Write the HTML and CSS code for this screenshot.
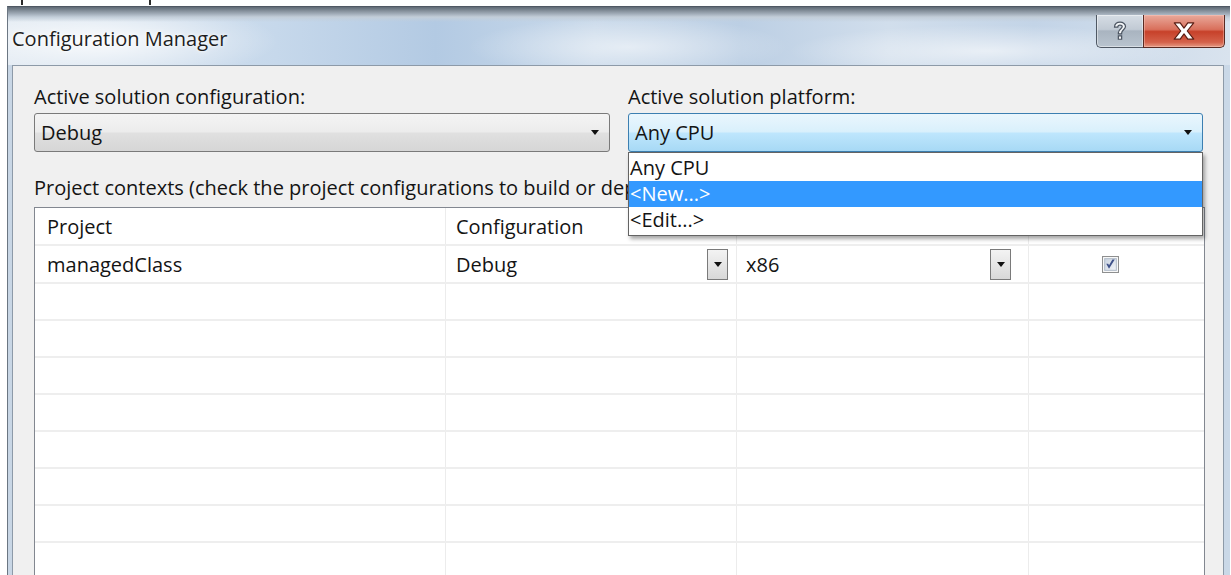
FILE: index.html
```html
<!DOCTYPE html>
<html lang="en">
<head>
<meta charset="utf-8">
<title>Configuration Manager</title>
<link rel="stylesheet" href="styles.css">
</head>
<body>
<div class="screen">
  <div class="strip"><span class="tick"></span><span class="tick tick-2"></span></div>
  <div class="window">
    <div class="titlebar">
      <div class="title">Configuration Manager</div>
      <div class="caption-buttons">
        <div class="cbtn help">
          <svg width="20" height="22" viewBox="0 0 18 20"><path d="M4 6.5 C4 3 6.5 2 9 2 C12 2 14 3.6 14 6 C14 8.6 10.5 9.2 10.5 11.8 L10.5 12.6 L7.5 12.6 L7.5 11.5 C7.5 8.3 11 7.8 11 6.2 C11 5.2 10.2 4.7 9 4.7 C7.8 4.7 7 5.4 7 6.5 Z M7.5 14.5 H10.5 V17.5 H7.5 Z" fill="#f4f6f8" stroke="#4a5360" stroke-width="1.1"/></svg>
        </div>
        <div class="cbtn close">
          <svg width="26" height="20" viewBox="0 0 24 18"><path d="M3 1.5 H8.5 L12 6.3 L15.5 1.5 H21 L15 9 L21 16.5 H15.5 L12 11.7 L8.5 16.5 H3 L9 9 Z" fill="#fff" stroke="#5a1e14" stroke-width="1.1" stroke-linejoin="round"/></svg>
        </div>
      </div>
    </div>
    <div class="client">
      <div class="selectors">
        <div class="field">
          <div class="label">Active solution configuration:</div>
          <div class="combo">
            <span class="combo-text">Debug</span>
            <span class="arrow"></span>
          </div>
        </div>
        <div class="field">
          <div class="label">Active solution platform:</div>
          <div class="combo combo-hot">
            <span class="combo-text">Any CPU</span>
            <span class="arrow"></span>
          </div>
          <ul class="droplist">
            <li>Any CPU</li>
            <li class="selected">&lt;New...&gt;</li>
            <li>&lt;Edit...&gt;</li>
          </ul>
        </div>
      </div>
      <div class="label contexts">Project contexts (check the project configurations to build or deploy):</div>
      <div class="grid">
        <div class="row head">
          <div class="cell c-project">Project</div>
          <div class="cell c-config">Configuration</div>
          <div class="cell c-platform">Platform</div>
          <div class="cell c-build">Build</div>
        </div>
        <div class="row first">
          <div class="cell c-project">managedClass</div>
          <div class="cell c-config">
            <span class="cell-text">Debug</span>
            <span class="mini-btn"><span class="arrow"></span></span>
          </div>
          <div class="cell c-platform">
            <span class="cell-text">x86</span>
            <span class="mini-btn"><span class="arrow"></span></span>
          </div>
          <div class="cell c-build">
            <svg class="check" width="17" height="17" viewBox="0 0 16 16">
              <defs>
                <linearGradient id="box" x1="0" y1="0" x2="1" y2="1">
                  <stop offset="0" stop-color="#c9d3e0"/>
                  <stop offset="1" stop-color="#f2f4f8"/>
                </linearGradient>
              </defs>
              <rect x="0.5" y="0.5" width="15" height="15" fill="#fff" stroke="#8e8f8f"/>
              <rect x="2.5" y="2.5" width="11" height="11" fill="url(#box)" stroke="#b3bdca"/>
              <path d="M4 7.2 L6.6 12 L12 3.4 L9.8 3.4 L6.6 8.8 L5.9 7.2 Z" fill="#3f5189"/>
            </svg>
          </div>
        </div>
        <div class="row"><div class="cell c-project"></div><div class="cell c-config"></div><div class="cell c-platform"></div><div class="cell c-build"></div></div>
        <div class="row"><div class="cell c-project"></div><div class="cell c-config"></div><div class="cell c-platform"></div><div class="cell c-build"></div></div>
        <div class="row"><div class="cell c-project"></div><div class="cell c-config"></div><div class="cell c-platform"></div><div class="cell c-build"></div></div>
        <div class="row"><div class="cell c-project"></div><div class="cell c-config"></div><div class="cell c-platform"></div><div class="cell c-build"></div></div>
        <div class="row"><div class="cell c-project"></div><div class="cell c-config"></div><div class="cell c-platform"></div><div class="cell c-build"></div></div>
        <div class="row"><div class="cell c-project"></div><div class="cell c-config"></div><div class="cell c-platform"></div><div class="cell c-build"></div></div>
        <div class="row"><div class="cell c-project"></div><div class="cell c-config"></div><div class="cell c-platform"></div><div class="cell c-build"></div></div>
        <div class="row"><div class="cell c-project"></div><div class="cell c-config"></div><div class="cell c-platform"></div><div class="cell c-build"></div></div>
      </div>
    </div>
  </div>
</div>
</body>
</html>
```

FILE: styles.css
```css
html, body {
  margin: 0;
  padding: 0;
  background: #ffffff;
  overflow: hidden;
}

.screen {
  width: 1231px;
  height: 575px;
  overflow: hidden;
  font-family: "Open Sans", "Noto Sans", sans-serif;
  color: #141414;
}

/* thin desktop strip above the dialog */
.strip {
  height: 6px;
  display: flex;
}
.tick {
  width: 2px;
  height: 5px;
  background: #2a2a2a;
  margin-left: 21px;
}
.tick-2 {
  margin-left: 126px;
}

/* Aero window frame */
.window {
  margin-left: 7px;
  width: 1222px;
  height: 700px;
  border-left: 1px solid #6b7682;
  border-top: 1px solid #4f5863;
  background: linear-gradient(90deg, #c8d6e5 0%, #d3dfeb 40%, #cad8e7 100%);
}

.titlebar {
  height: 58px;
  display: flex;
  justify-content: space-between;
  align-items: flex-start;
  background:
    linear-gradient(180deg, #5f6974 0px, #7c8792 3px, #a3aeba 7px, #c3ced9 10px, rgba(220,230,240,0) 15px),
    radial-gradient(ellipse 180px 40px at 90px 34px, rgba(255,255,255,0.85), rgba(255,255,255,0) 100%),
    radial-gradient(ellipse 160px 30px at 620px 40px, rgba(255,255,255,0.55), rgba(255,255,255,0) 100%),
    radial-gradient(ellipse 200px 26px at 980px 44px, rgba(255,255,255,0.6), rgba(255,255,255,0) 100%),
    linear-gradient(90deg, #dfe8f1 0%, #c6d8eb 22%, #b3cae3 35%, #c9d9ea 48%, #bccfe4 60%, #d1deec 72%, #c3d4e7 84%, #d9e3ee 100%);
}

.title {
  padding-left: 4px;
  margin-top: 19px;
  font-size: 20px;
  line-height: 26px;
  color: #1e1e1e;
  text-shadow: 0 0 6px rgba(255,255,255,0.9), 0 0 3px rgba(255,255,255,0.9);
}

.caption-buttons {
  display: flex;
  margin-top: 8px;
  margin-right: 5px;
}
.cbtn {
  height: 33px;
  box-sizing: border-box;
  display: flex;
  align-items: center;
  justify-content: center;
  border: 1px solid #4f5864;
  border-top: none;
}
.cbtn.help {
  width: 47px;
  border-radius: 0 0 0 5px;
  border-right: none;
  background: linear-gradient(180deg, #d6dde5 0%, #c1cad4 45%, #a9b4c0 50%, #b9c4cf 100%);
  box-shadow: inset 0 0 0 1px rgba(255,255,255,0.45);
}
.cbtn.close {
  width: 82px;
  border-radius: 0 0 5px 0;
  border-color: #5a2a22;
  background: linear-gradient(180deg, #e9a99b 0%, #d9705c 45%, #c7412a 52%, #d4614a 85%, #e59a84 100%);
  box-shadow: inset 0 0 0 1px rgba(255,210,200,0.4);
}

/* dialog client area */
.client {
  margin: 0 6px 0 4px;
  height: 640px;
  box-sizing: border-box;
  border: 1px solid #8d9aa8;
  border-bottom: none;
  background: #f0f0f0;
  padding: 20px 19px 0 21px;
  font-size: 20px;
}

.label {
  line-height: 22px;
  height: 22px;
}

.selectors {
  display: grid;
  grid-template-columns: 576px 575px;
  column-gap: 18px;
}
.field {
  position: relative;
}

.combo {
  margin-top: 5px;
  height: 39px;
  box-sizing: border-box;
  border: 1px solid #7a7a7a;
  border-radius: 3px;
  background: linear-gradient(180deg, #f4f4f4 0%, #ececec 48%, #e0e0e0 52%, #d6d6d6 100%);
  display: flex;
  align-items: center;
  justify-content: space-between;
  padding: 0 10px 0 6px;
}
.combo-hot {
  border-color: #3c7fb1;
  background: linear-gradient(180deg, #eaf6fd 0%, #d9f0fc 48%, #bee6fd 52%, #a7d9f5 100%);
}
.combo-text {
  line-height: 22px;
}

.arrow {
  width: 0;
  height: 0;
  border-left: 4px solid transparent;
  border-right: 4px solid transparent;
  border-top: 5px solid #111;
}

/* open list of the platform combo, drawn over the caption below */
.droplist {
  position: absolute;
  left: 0;
  right: 0;
  top: 100%;
  margin: 0;
  padding: 2px 0 2px 0;
  list-style: none;
  background: #ffffff;
  border: 1px solid #646464;
  box-shadow: 2px 3px 4px rgba(0,0,0,0.35);
  z-index: 2;
}
.droplist li {
  height: 26px;
  line-height: 26px;
  padding-left: 1px;
}
.droplist li.selected {
  background: #3399ff;
  color: #ffffff;
}

.contexts {
  margin-top: 25px;
  white-space: nowrap;
}

/* project grid */
.grid {
  margin-top: 8px;
  width: 1169px;
  border: 1px solid #828790;
  border-bottom: none;
  background: #ffffff;
}
.row {
  display: flex;
  height: 37px;
  border-bottom: 2px solid #eeeeee;
  box-sizing: border-box;
}
.row.head {
  height: 38px;
}
.row.first {
  height: 38px;
}
.cell {
  box-sizing: border-box;
  display: flex;
  align-items: center;
  padding-left: 12px;
  border-right: 1px solid #ececec;
}
.c-project { width: 411px; }
.c-config { width: 291px; padding-left: 10px; justify-content: space-between; padding-right: 8px; }
.c-platform { width: 292px; padding-left: 9px; justify-content: space-between; padding-right: 17px; }
.c-build { width: 175px; border-right: none; padding-left: 73px; }

.mini-btn {
  width: 21px;
  height: 31px;
  box-sizing: border-box;
  border: 1px solid #7a7a7a;
  background: linear-gradient(180deg, #f3f3f3 0%, #e6e6e6 50%, #d8d8d8 100%);
  display: flex;
  align-items: center;
  justify-content: center;
}
.mini-btn .arrow {
  border-left-width: 4px;
  border-right-width: 4px;
  border-top-width: 5px;
}
```
